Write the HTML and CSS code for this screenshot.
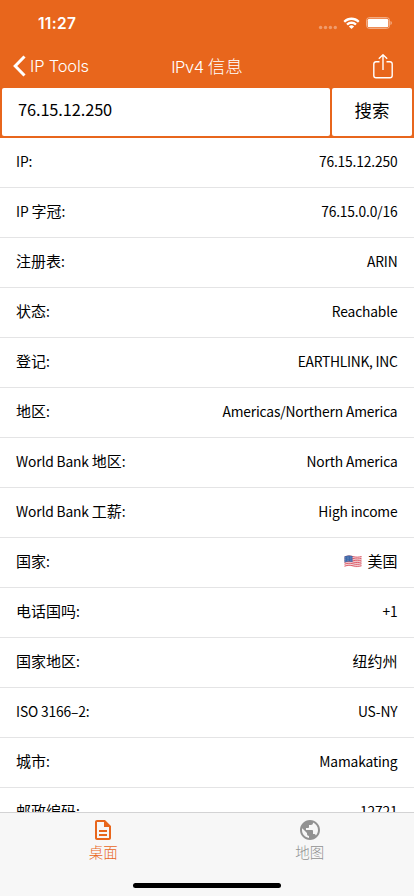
FILE: index.html
```html
<!DOCTYPE html>
<html lang="zh-CN">
<head>
  <meta charset="UTF-8">
  <meta name="viewport" content="width=device-width, initial-scale=1.0">
  <title>IPv4 信息</title>
  <link rel="stylesheet" href="styles.css">
</head>
<body>
  <header class="header">
    <div class="status-bar">
      <span class="time">11:27</span>
      <div class="status-icons">
        <svg class="signal" width="20" height="5" viewBox="0 0 20 5">
          <circle cx="2.6" cy="2.5" r="1.7"/>
          <circle cx="7.5" cy="2.5" r="1.7"/>
          <circle cx="12.4" cy="2.5" r="1.7"/>
          <circle cx="17.3" cy="2.5" r="1.7"/>
        </svg>
        <svg class="wifi" width="17" height="13" viewBox="0.2 0 15.6 11.4">
          <path d="M8 2.4c2.2 0 4.2.85 5.7 2.3.1.1.3.1.4 0l1.1-1.1c.1-.1.1-.3 0-.45A10.400 10.400 0 0 0 .8 3.150c-.1.15-.1.35 0 .45l1.100 1.100c.1.1.3.1.4 0C3.800 3.250 5.800 2.400 8 2.400z"/>
          <path d="M8 6.100c1.200 0 2.300.45 3.150 1.200.1.1.3.1.4 0l1.100-1.100c.1-.1.1-.3 0-.45a6.800 6.800 0 0 0-9.300 0c-.1.15-.1.35 0 .45l1.100 1.100c.1.1.3.1.4 0C5.700 6.550 6.800 6.100 8 6.100z"/>
          <path d="M10.200 8.600c.1-.1.1-.3 0-.4a3.400 3.400 0 0 0-4.400 0c-.1.1-.1.3 0 .4l2 2c.1.1.3.1.4 0z"/>
        </svg>
        <svg class="battery" width="26" height="12" viewBox="0 0 26 12">
          <rect class="battery-case" x=".5" y=".5" width="23" height="11" rx="3"/>
          <rect x="1.700" y="1.700" width="20.600" height="8.600" rx="1.600"/>
          <path class="battery-tip" d="M24.500 4v4c.8-.3 1.300-1.100 1.300-2s-.5-1.700-1.300-2z"/>
        </svg>
      </div>
    </div>
    <nav class="nav-bar">
      <a class="back" href="#">
        <svg width="13" height="22" viewBox="0 0 13 22"><path d="M11.500 1.500 2.200 11l9.300 9.500"/></svg>
        <span>IP Tools</span>
      </a>
      <h1 class="title">IPv4 <span class="title-zh">信息</span></h1>
      <a class="share" href="#">
        <svg width="20" height="25" viewBox="0 0 20 25">
          <path d="M6.500 7.700H3A2.200 2.200 0 0 0 .8 9.900v11.700A2.200 2.200 0 0 0 3 23.800h14a2.200 2.200 0 0 0 2.200-2.200V9.900A2.200 2.200 0 0 0 17 7.700h-3.500M10 16V1M5.800 4.800 10 .8l4.200 4"/>
        </svg>
      </a>
    </nav>
    <form class="search">
      <input class="search-input" type="text" value="76.15.12.250">
      <button class="search-btn" type="button">搜索</button>
    </form>
  </header>

  <main class="list">
    <div class="row"><span>IP:</span><span>76.15.12.250</span></div>
    <div class="row"><span>IP <b>字冠</b>:</span><span>76.15.0.0/16</span></div>
    <div class="row"><span><b>注册表</b>:</span><span>ARIN</span></div>
    <div class="row"><span><b>状态</b>:</span><span>Reachable</span></div>
    <div class="row"><span><b>登记</b>:</span><span class="narrow">EARTHLINK, INC</span></div>
    <div class="row"><span><b>地区</b>:</span><span>Americas/Northern America</span></div>
    <div class="row"><span>World Bank <b>地区</b>:</span><span>North America</span></div>
    <div class="row"><span>World Bank <b>工薪</b>:</span><span>High income</span></div>
    <div class="row">
      <span><b>国家</b>:</span>
      <span class="country">
        <svg class="flag" width="18" height="13" viewBox="0 0 18 13">
          <path fill="#f3dfe1" d="M.5 1.500C4 .2 6 .3 9 1.100s5.500.8 8.500-.1v10.600c-3 .9-5.500.9-8.500.1s-5-.9-8.500.4z"/>
          <path fill="none" stroke="#dc5362" stroke-width=".95" d="M.5 2C4 .7 6 .8 9 1.600s5.500.8 8.500-.1M.5 3.800C4 2.500 6 2.600 9 3.400s5.500.8 8.500-.1M.5 5.600C4 4.300 6 4.400 9 5.200s5.500.8 8.500-.1M.5 7.400C4 6.100 6 6.200 9 7s5.500.8 8.500-.1M.5 9.200C4 7.900 6 8 9 8.800s5.500.8 8.500-.1M.5 11.200C4 9.900 6 10 9 10.800s5.500.8 8.500-.1"/>
          <path fill="#3d67a8" d="M.5 1.500C4 .2 6 .3 8.500 1v6C6 6.300 4 6.200.5 7.500z"/>
          <path fill="none" stroke="#a9bddb" stroke-width=".5" stroke-dasharray=".6 1" d="M1.300 2.800C4 1.900 6 1.900 8 2.400M1.300 4.400C4 3.500 6 3.500 8 4M1.300 6C4 5.100 6 5.100 8 5.600"/>
        </svg>
        <b>美国</b>
      </span>
    </div>
    <div class="row"><span><b>电话国吗</b>:</span><span>+1</span></div>
    <div class="row"><span><b>国家地区</b>:</span><span><b>纽约州</b></span></div>
    <div class="row"><span>ISO 3166–2:</span><span>US-NY</span></div>
    <div class="row"><span><b>城市</b>:</span><span>Mamakating</span></div>
    <div class="row"><span><b>邮政编码</b>:</span><span>12721</span></div>
  </main>

  <footer class="tab-bar">
    <div class="tabs">
      <a class="tab active" href="#">
        <svg width="24" height="24" viewBox="0 0 24 24"><path d="M8 16h8v2H8zm0-4h8v2H8zm6-10H6c-1.100 0-2 .9-2 2v16c0 1.100.89 2 1.990 2H18c1.100 0 2-.9 2-2V8l-6-6zm4 18H6V4h7v5h5v11z"/></svg>
        <span>桌面</span>
      </a>
      <a class="tab" href="#">
        <svg width="24" height="24" viewBox="0 0 24 24"><path d="M12 2C6.480 2 2 6.480 2 12s4.480 10 10 10 10-4.480 10-10S17.520 2 12 2zm-1 17.930c-3.950-.49-7-3.850-7-7.930 0-.62.080-1.210.21-1.790L9 15v1c0 1.100.9 2 2 2v1.930zm6.900-2.540c-.26-.81-1-1.390-1.900-1.390h-1v-3c0-.55-.45-1-1-1H8v-2h2c.55 0 1-.45 1-1V7h2c1.100 0 2-.9 2-2v-.41c2.930 1.190 5 4.060 5 7.410 0 2.080-.8 3.970-2.100 5.390z"/></svg>
        <span>地图</span>
      </a>
    </div>
    <div class="home-indicator"></div>
  </footer>
</body>
</html>
```
FILE: styles.css
```css
* {
  box-sizing: border-box;
}
body {
  display: flex;
  flex-direction: column;
  height: 896px;
  margin: 0;
  overflow: hidden;
  font-family: "Noto Sans CJK SC", sans-serif;
  color: #000;
  background-color: #fff;
}
a {
  color: inherit;
  text-decoration: none;
}
svg {
  display: block;
}

.header {
  flex: none;
  height: 138px;
  color: #fff;
  background-color: #e8661c;
}
.status-bar {
  display: flex;
  justify-content: space-between;
  height: 44px;
  padding: 12px 22px 0 38px;
}
.time {
  font-family: Inter, sans-serif;
  font-size: 15.5px;
  font-weight: 600;
  line-height: 23px;
  letter-spacing: 0.3px;
}
.status-icons {
  display: flex;
  height: 22px;
  align-items: center;
  fill: #fff;
}
.signal {
  margin: 8px 5px 0 0;
  opacity: 0.35;
}
.wifi {
  margin-right: 6px;
}
.battery-case {
  fill: none;
  stroke: #fff;
  stroke-opacity: 0.45;
}
.battery-tip {
  opacity: 0.5;
}
.nav-bar {
  display: grid;
  grid-template-columns: 1fr auto 1fr;
  align-items: center;
  height: 44px;
  padding: 0 13px;
  font-family: Inter, "Noto Sans CJK SC", sans-serif;
  font-size: 16.5px;
  font-weight: 300;
  letter-spacing: -0.2px;
}
.back {
  display: flex;
  align-items: center;
  gap: 4px;
}
.back svg {
  fill: none;
  stroke: #fff;
  stroke-width: 3;
}
.title {
  margin: 0;
  padding-bottom: 2px;
  font-size: 16.5px;
  font-weight: 300;
  letter-spacing: -0.5px;
}
.title-zh {
  font-size: 17.5px;
  letter-spacing: 0;
}
.share {
  justify-self: end;
  margin-right: 8px;
}
.share svg {
  fill: none;
  stroke: #fff;
  stroke-width: 1.4;
}
.search {
  display: flex;
  gap: 2px;
  height: 50px;
  padding: 0 2px 2px;
}
.search-input,
.search-btn {
  height: 48px;
  border: none;
  border-radius: 2px;
  color: #000;
  background-color: #fff;
  font-family: inherit;
}
.search-input {
  flex: 1;
  min-width: 0;
  padding: 0 16px 6px;
  font-size: 16.4px;
  letter-spacing: -0.12px;
}
.search-btn {
  width: 80px;
  padding: 0 0 5px;
  font-size: 17.5px;
}

.list {
  flex: 1;
  min-height: 0;
  overflow: hidden;
}
.row {
  display: flex;
  justify-content: space-between;
  height: 50px;
  padding: 0 16.5px 0 16px;
  border-bottom: 1px solid #e4e4e5;
  font-size: 13.8px;
  line-height: 46px;
  letter-spacing: -0.15px;
}
.row b {
  font-size: 15px;
  font-weight: 400;
  letter-spacing: 0;
}
.row .narrow {
  letter-spacing: -0.27px;
}
.country {
  display: flex;
  gap: 5px;
}
.flag {
  margin-top: 17px;
}

.tab-bar {
  display: flex;
  flex: none;
  flex-direction: column;
  justify-content: space-between;
  align-items: center;
  height: 84px;
  padding-bottom: 8px;
  border-top: 1px solid #d3d3d4;
  background-color: #f7f7f7;
}
.tabs {
  display: flex;
  width: 100%;
  padding: 5px 1px 0 0;
}
.tab {
  display: flex;
  flex: 1;
  flex-direction: column;
  align-items: center;
  color: #929292;
  fill: #929292;
  font-size: 14.5px;
  font-weight: 300;
  line-height: 20px;
}
.tab.active {
  color: #e8661c;
  fill: #e8661c;
}
.home-indicator {
  width: 148px;
  height: 5px;
  border-radius: 3px;
  background-color: #000;
}
```
